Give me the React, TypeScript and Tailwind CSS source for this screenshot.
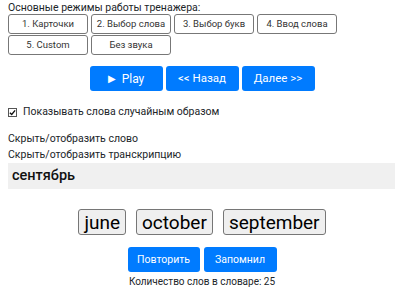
const modes = ['1. Карточки', '2. Выбор слова', '3. Выбор букв', '4. Ввод слова', '5. Custom', 'Без звука']
const words = ['june', 'october', 'september']

export default function App() {
  return (
    <div className="p-2 pt-px text-[#212529] bg-white min-h-screen" style={{ fontFamily: 'Roboto, "Noto Sans", sans-serif' }}>
      <div className="text-[10.5px] leading-[13px]">Основные режимы работы тренажера:</div>
      <div className="flex flex-wrap w-[340px] gap-x-[3px] gap-y-px">
        {modes.map((m) => (
          <button
            key={m}
            className="w-[80px] h-[20px] bg-white border border-[#777] rounded-[3px] text-[9.5px] leading-none text-[#333] whitespace-nowrap"
          >
            {m}
          </button>
        ))}
      </div>

      <div className="flex justify-center gap-[3px] mt-[11px] pl-[4px]">
        <button className="w-[73px] h-[25px] bg-[#007bff] text-white rounded-[3px] text-[12px] flex items-center justify-center gap-[6px]">
          <span className="text-[10px]">▶</span> Play
        </button>
        <button className="w-[73px] h-[25px] bg-[#007bff] text-white rounded-[3px] text-[11.5px]">&lt;&lt; Назад</button>
        <button className="w-[73px] h-[25px] bg-[#007bff] text-white rounded-[3px] text-[11.5px]">Далее &gt;&gt;</button>
      </div>

      <label className="flex items-center gap-[6px] mt-[12px] text-[10.5px] leading-[18px]">
        <span className="w-[9px] h-[9px] border border-[#555] bg-white flex items-center justify-center">
          <svg viewBox="0 0 8 8" className="w-[7px] h-[7px]">
            <path d="M1 4.2 L3.1 6.2 L7 1.6" fill="none" stroke="#111" strokeWidth="1.6" />
          </svg>
        </span>
        Показывать слова случайным образом
      </label>

      <div className="mt-[10px] text-[10.5px] leading-[16px]">Скрыть/отобразить слово</div>
      <div className="text-[10.5px] leading-[16px]">Скрыть/отобразить транскрипцию</div>
      <div className="bg-[#f0f0f0] h-[26px] w-[387px] flex items-center px-[4px] text-[14.5px] font-medium text-[#111]">
        сентябрь
      </div>

      <div className="flex justify-center gap-[10px] mt-[20px] pl-[4px]">
        {words.map((w) => (
          <button
            key={w}
            className="h-[26px] px-[5px] bg-[#efefef] border border-[#767676] rounded-[3px] text-[19px] leading-none text-black"
          >
            {w}
          </button>
        ))}
      </div>

      <div className="flex justify-center gap-[4px] mt-[12px] pl-[4px]">
        <button className="w-[72px] h-[25px] bg-[#007bff] text-white rounded-[3px] text-[10.5px]">Повторить</button>
        <button className="w-[73px] h-[25px] bg-[#007bff] text-white rounded-[3px] text-[10.5px]">Запомнил</button>
      </div>
      <div className="text-center text-[10px] leading-[13px] mt-[3px] pl-[4px]">Количество слов в словаре: 25</div>
    </div>
  )
}
